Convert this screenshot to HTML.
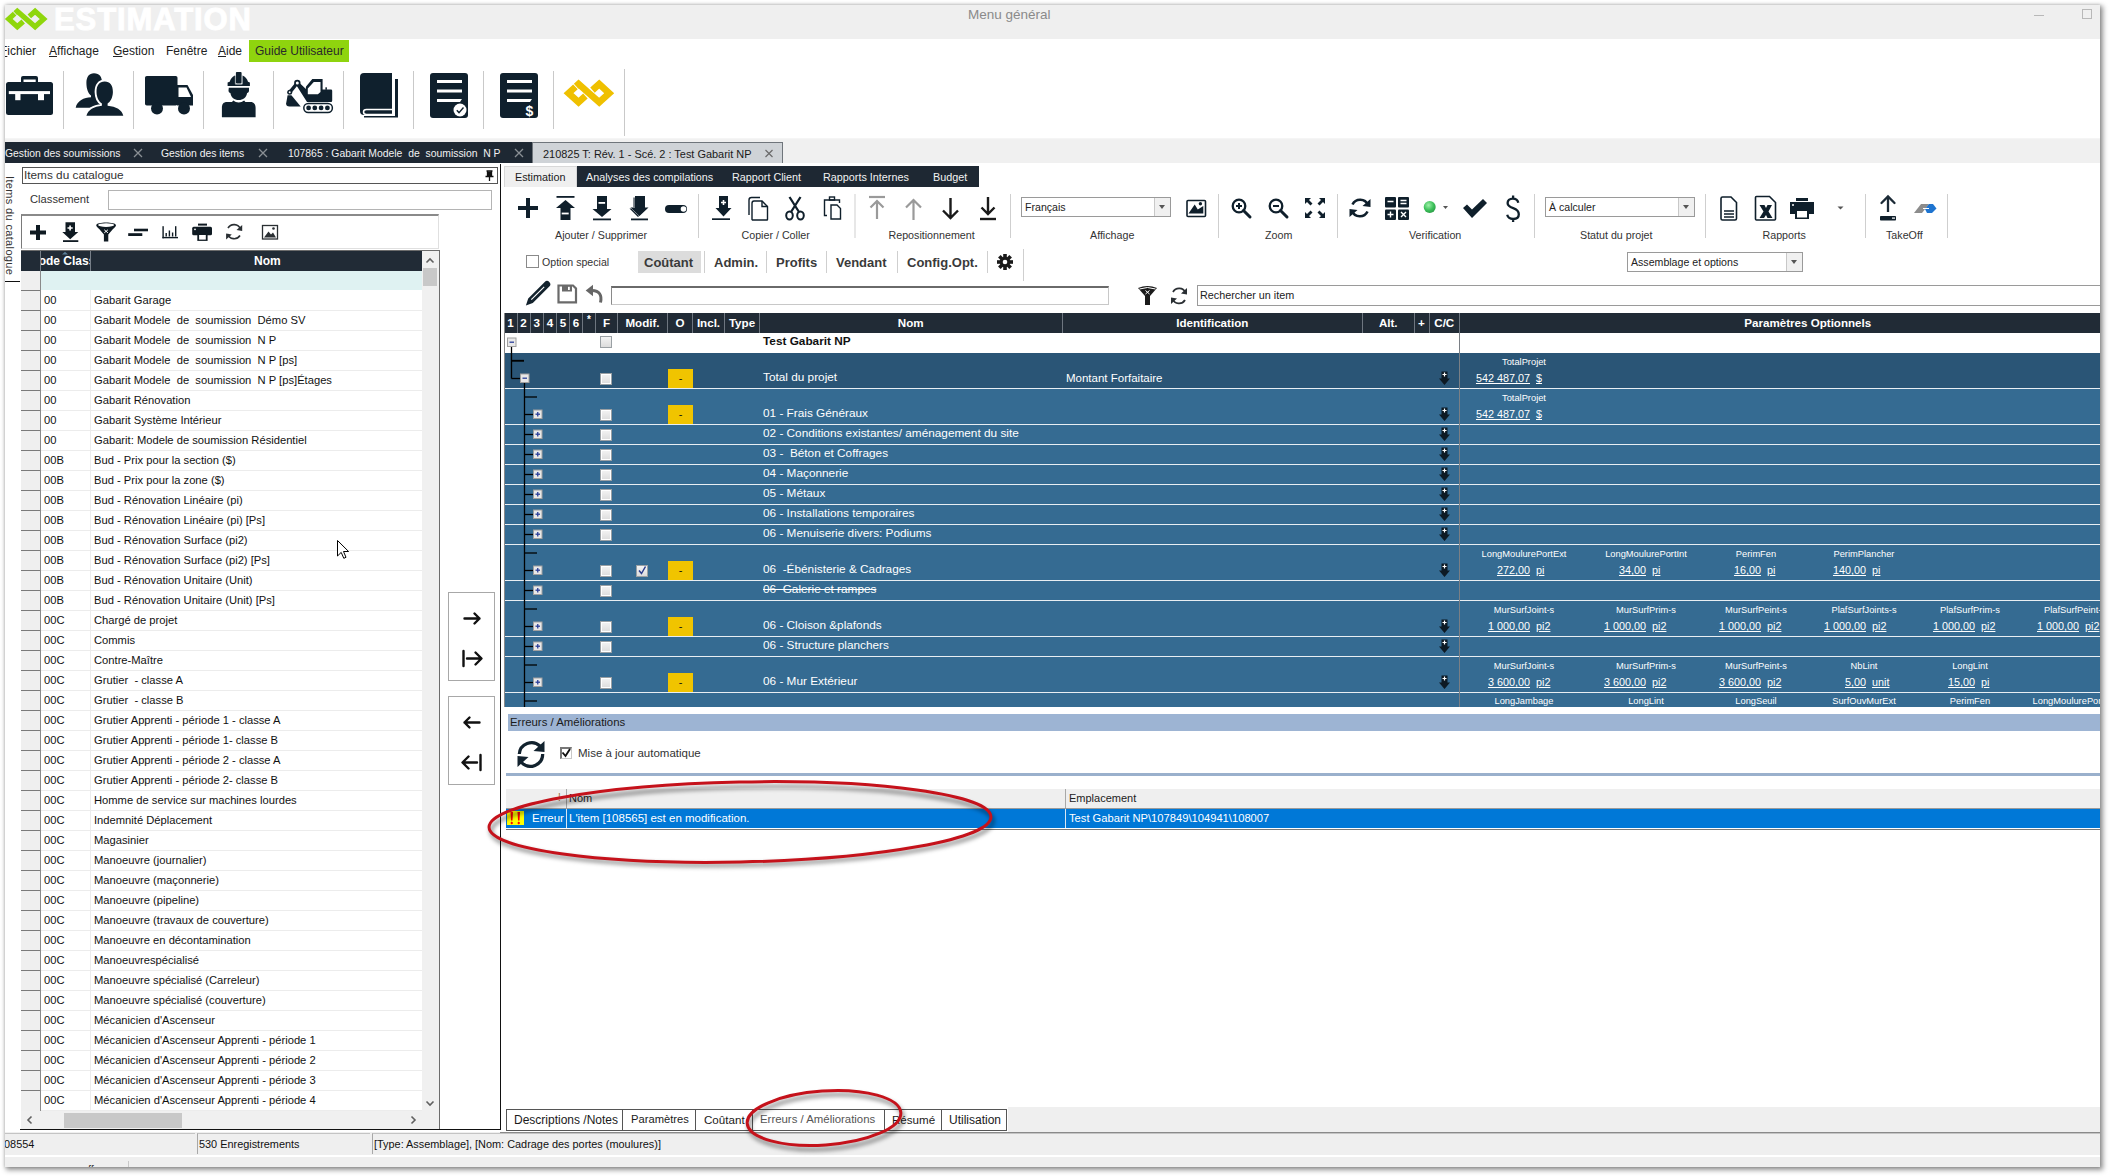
<!DOCTYPE html>
<html><head><meta charset="utf-8">
<style>
*{box-sizing:border-box;margin:0;padding:0}
html,body{width:2109px;height:1176px;overflow:hidden;background:#fff;font-family:"Liberation Sans",sans-serif;font-size:11.5px;color:#1a1a1a;position:relative}
.a{position:absolute}
.t{position:absolute;white-space:nowrap;line-height:1}
svg{position:absolute;overflow:visible}
</style></head><body>
<div class="a" style="left:5px;top:5px;width:2095px;height:1162px;background:#fff;box-shadow:2px 2px 5px 1px rgba(0,0,0,0.42), 0 0 3px rgba(0,0,0,0.18)"></div>
<div class="a" style="left:5px;top:5px;width:2095px;height:34px;background:#efefef"></div>
<svg style="left:0;top:0" width="60" height="40" viewBox="0 0 60 40">
<g fill="none" stroke="#8fd60c" stroke-width="5.2" stroke-linejoin="miter" stroke-linecap="butt">
<path d="M14.6,13.6 L8.7,19 L17.3,26.8 L23.2,21.5"/>
<path d="M29.3,16.4 L35.1,11.2 L43.7,19 L35.1,26.8 L17.3,11.2 L15.2,13.1"/>
</g>
</svg>
<div class="t" style="left:54px;top:6px;font-size:31px;font-weight:bold;color:#fff;letter-spacing:0.9px;line-height:28px;-webkit-text-stroke:0.9px #fff">ESTIMATION</div>
<div class="t" style="left:968px;top:8px;font-size:13.5px;color:#8a8a8a">Menu général</div>
<div class="a" style="left:2034px;top:15px;width:10px;height:1px;background:#b8b8b8"></div>
<div class="a" style="left:2082px;top:9px;width:10px;height:10px;border:1px solid #b8b8b8"></div>

<div class="a" style="left:5px;top:38px;width:400px;height:25px;overflow:hidden">
<div class="t" style="left:-5px;top:7px;font-size:12px;color:#222"><u>F</u>ichier</div>
<div class="t" style="left:44px;top:7px;font-size:12px;color:#222"><u>A</u>ffichage</div>
<div class="t" style="left:108px;top:7px;font-size:12px;color:#222"><u>G</u>estion</div>
<div class="t" style="left:161px;top:7px;font-size:12px;color:#222">Fenêtre</div>
<div class="t" style="left:213px;top:7px;font-size:12px;color:#222"><u>A</u>ide</div>
<div class="a" style="left:244px;top:2px;width:100px;height:22px;background:#8fd40e"></div>
<div class="t" style="left:250px;top:7px;font-size:12px;color:#2a2a2a">Guide Utilisateur</div>
</div>

<svg style="left:0;top:0" width="700" height="142" viewBox="0 0 700 142">
<g fill="#0f202d">
<!-- toolbox -->
<path d="M21,83 L21,78 Q21,76 23,76 L36,76 Q38,76 38,78 L38,83 L35.7,83 L35.7,79.4 L23.5,79.4 L23.5,83 Z"/>
<rect x="6" y="82" width="47" height="33" rx="2.5"/>
</g>
<g fill="#fff">
<rect x="8.8" y="91.1" width="41.2" height="3"/>
<rect x="15.2" y="94" width="5.3" height="6.2"/>
<rect x="38" y="94" width="6" height="6.2"/>
</g>
<g fill="#0f202d">
<!-- people -->
<path d="M94,73.3 C99.5,73.3 102.2,77 102,83 C101.8,89.5 99.5,93.8 97.5,95.4 L97.5,97.4 C101,97.8 104,98.5 106,99.5 L100,107.8 L75.7,107.8 C77,101 84,97.5 91,97.3 L91,95.4 C88.5,93.8 86.4,89.5 86.4,83 C86.4,77 89,73.3 94,73.3 Z"/>
<path stroke="#fff" stroke-width="3.8" paint-order="stroke" d="M104.7,81.5 C110,81.5 113,85.5 112.9,92 C112.8,98 110,102 107.6,103.5 L107.6,105.8 C116,106.5 122,110 123.3,115.8 L86.4,115.8 C88,110 94,106.5 101.9,105.8 L101.9,103.5 C99.4,102 96.6,98 96.5,92 C96.4,85.5 99.4,81.5 104.7,81.5 Z"/>
<rect x="80" y="116.2" width="50" height="3" fill="#fff"/>
<!-- truck -->
<rect x="145" y="76" width="32.5" height="29.5" rx="1.8"/>
<path d="M177,85 L187.5,85 L193,95 L193,105.5 L177,105.5 Z"/>
<circle cx="157" cy="108.5" r="6"/>
<circle cx="184" cy="108.5" r="6"/>
</g>
<path d="M178.5,87.5 L186.5,87.5 L191,97 L178.5,97 Z" fill="#fff"/>
<g fill="#0f202d">
<!-- worker -->
<path d="M227.6,85.9 L227.6,82.5 L229.7,81.8 C230.5,79 232.5,76.8 234.9,75.6 L235.2,75.6 L235.2,84.3 L242.5,84.3 L242.5,75.6 C245.2,76.8 247.3,79 248,81.8 L249.9,82.5 L249.9,85.9 Z"/>
<rect x="235.9" y="72.1" width="5.7" height="11.3" rx="0.8"/>
<path d="M228.8,87.7 L249,87.7 L249,90.5 C249,92 248.2,92.8 247.1,93 C246.5,97.5 243,100.1 238.7,100.1 C234.4,100.1 231,97.5 230.4,93 C229.3,92.8 228.5,92 228.5,90.5 Z"/>
<path d="M221.9,117.3 L221.9,108 C221.9,104 223.5,102 227,102 L232,102 L233.3,100.6 C234.8,101.8 236.7,102.6 238.7,102.6 C240.7,102.6 242.6,101.8 244.1,100.6 L245.4,102 L250.5,102 C254,102 255.6,104.5 255.6,108 L255.6,117.3 Z"/>
</g>
<path d="M235.3,76 L235.3,83.6 Q235.3,84.4 236.1,84.4 L241.4,84.4 Q242.2,84.4 242.2,83.6 L242.2,76" fill="none" stroke="#8d979e" stroke-width="0.8"/>
<g fill="#0f202d">
<!-- excavator -->
<path fill-rule="evenodd" d="M299.6,83 L305.9,89 L305.9,86.7 L312.3,79 L322.6,79 L322.6,89.5 L331,89.5 Q332.2,89.5 332.2,90.7 L332.2,100.7 Q332.2,101.9 331,101.9 L307,101.9 L296.5,85.5 Z M307.8,88.6 L313.8,81.9 L320.5,81.9 L320.5,92 L317.9,94.2 L307.8,94.2 Z"/>
<path d="M297.3,83 L289.7,92.3" stroke="#0f202d" stroke-width="3.4"/>
<circle cx="297.3" cy="83" r="3.2"/><circle cx="289.7" cy="92.3" r="2.5"/>
<rect x="325.4" y="87.3" width="1.5" height="2.5"/>
<path d="M287.6,95.3 L291.4,95.3 L300.7,106.5 L289.5,106.5 Q286,106.5 286.1,103.5 Z"/>
<rect x="303.8" y="103.5" width="28.6" height="8.9" rx="4.45" fill="none" stroke="#0f202d" stroke-width="1.5"/>
<circle cx="308.6" cy="107.95" r="2.4"/><circle cx="314.8" cy="107.95" r="2.4"/><circle cx="321.1" cy="107.95" r="2.4"/><circle cx="327.4" cy="107.95" r="2.4"/>
</g>
<g fill="#fff"><circle cx="297.3" cy="83" r="1.5"/><circle cx="289.7" cy="92.3" r="1"/></g>
<g fill="#0f202d">
<!-- book -->
<path d="M364,73 L392,73 L392,115 L364,115 Q360,115 360,111 L360,77 Q360,73 364,73 Z"/>
<rect x="395" y="79" width="3" height="38"/>
<rect x="364" y="116" width="34" height="1.5"/>
</g>
<path d="M392,109.5 L366.5,109.5 Q363.5,109.5 363.5,112 Q363.5,114.5 366.5,114.5 L392,114.5" fill="none" stroke="#fff" stroke-width="1.5"/>
<g fill="#0f202d">
<!-- doc check -->
<rect x="430" y="73" width="38" height="45" rx="3"/>
<rect x="500" y="73" width="38" height="45" rx="3"/>
</g>
<g fill="#fff">
<rect x="437" y="80" width="25" height="3"/><rect x="437" y="89.5" width="25" height="3"/><path d="M437,99 L462,99 L460,102 L437,102 Z"/>
<circle cx="460" cy="110" r="6.5"/>
<rect x="507" y="80" width="25" height="3"/><rect x="507" y="89.5" width="25" height="3"/><path d="M507,99 L532,99 L530,102 L507,102 Z"/>
</g>
<path d="M456.8,110.3 L459,112.6 L463.5,107.5" fill="none" stroke="#0f202d" stroke-width="1.4"/>
<text x="525.5" y="115.5" font-family="Liberation Sans" font-weight="bold" font-size="14" fill="#fff">$</text>
<!-- yellow logo -->
<g fill="none" stroke="#efc000" stroke-width="5.8" stroke-linejoin="miter" stroke-linecap="butt" transform="translate(558.5,71.1) scale(1.16)">
<path d="M14.6,13.6 L8.7,19 L17.3,26.8 L23.2,21.5"/>
<path d="M29.3,16.4 L35.1,11.2 L43.7,19 L35.1,26.8 L17.3,11.2 L15.2,13.1"/>
</g>
<g fill="#c9c9c9">
<rect x="63" y="71" width="1" height="58"/><rect x="133" y="71" width="1" height="58"/><rect x="203" y="71" width="1" height="58"/><rect x="273" y="71" width="1" height="58"/><rect x="343" y="71" width="1" height="58"/><rect x="413" y="71" width="1" height="58"/><rect x="483" y="71" width="1" height="58"/><rect x="553" y="71" width="1" height="58"/><rect x="624" y="69" width="1" height="67"/>
</g>
<rect x="5" y="138.5" width="2095" height="1.2" fill="#ececec"/>
</svg>

<div class="a" style="left:5px;top:140px;width:2095px;height:23px;background:#f0f0f0"></div>
<div class="a" style="left:5px;top:142px;width:527px;height:21px;background:#1e2833"></div>
<div class="a" style="left:532px;top:142px;width:251px;height:21px;background:#cfd3d7;border:1px solid #6f757b;border-bottom:none"></div>
<div class="t" style="left:5px;top:149px;font-size:10.4px;color:#f2f2f2">Gestion des soumissions</div>
<div class="t" style="left:161px;top:149px;font-size:10.4px;color:#f2f2f2">Gestion des items</div>
<div class="t" style="left:288px;top:149px;font-size:10.4px;color:#f2f2f2">107865 : Gabarit Modele &nbsp;de &nbsp;soumission &nbsp;N P</div>
<div class="t" style="left:543px;top:149px;font-size:10.95px;color:#1a1a1a">210825 T: Rév. 1 - Scé. 2 : Test Gabarit NP</div>
<svg style="left:0;top:0" width="800" height="170">
<g stroke="#8a8f94" stroke-width="1.3">
<path d="M134,149 L142,157 M142,149 L134,157"/>
<path d="M259,149 L267,157 M267,149 L259,157"/>
<path d="M515,149 L523,157 M523,149 L515,157"/>
</g>
<g stroke="#6a6a6a" stroke-width="1.2" transform="translate(0,0)">
<path d="M765.5,150 L772.5,157 M772.5,150 L765.5,157"/>
</g>
</svg>

<div class="t" style="left:5px;top:176px;font-size:11px;color:#333;transform-origin:0 0;letter-spacing:0.35px;transform:translate(9.5px,0) rotate(90deg)">Items du catalogue</div>
<div class="a" style="left:5px;top:281px;width:15px;height:1px;background:#111"></div>
<div class="a" style="left:22px;top:167px;width:476px;height:17px;border:1px solid #555;background:#fff"></div>
<div class="t" style="left:24px;top:170px;font-size:11.8px;color:#333">Items du catalogue</div>
<svg style="left:0;top:0" width="500" height="200"><path d="M486.5,171 L492.5,171 M487.5,171 L487.5,176 M491.5,171 L491.5,176 M485.5,176.5 L493.5,176.5 M489.5,177 L489.5,181" stroke="#111" stroke-width="1.3" fill="none"/><rect x="487.5" y="171.5" width="4" height="5" fill="#111"/></svg>
<div class="t" style="left:30px;top:194px;font-size:11.2px;color:#333">Classement</div>
<div class="a" style="left:108px;top:190px;width:384px;height:20px;border:1px solid #b4b4b4;background:#fff"></div>
<div class="a" style="left:21px;top:214px;width:418px;height:35px;border-top:2px solid #8a8a8a;border-left:1px solid #7a7a7a;border-right:1px solid #e0e0e0;border-bottom:1px solid #e0e0e0;background:#fff"></div>
<svg style="left:0;top:0" width="500" height="260"><g fill="#0f1a22">
<path d="M36,225 L40,225 L40,230.5 L46,230.5 L46,234.5 L40,234.5 L40,240 L36,240 L36,234.5 L30,234.5 L30,230.5 L36,230.5 Z"/>
<path d="M65.5,222.3 L75,222.3 L75,232 L78.3,232 L70.2,239.2 L62.3,232 L65.5,232 Z"/><rect x="63" y="240.2" width="15.3" height="1.8"/>
<path d="M96.2,225.2 C96.2,221.5 116,221.5 116,225.2 C116,226.5 114,228 113,229 L108.3,234.5 L108.3,241.5 L103.9,241.5 L103.9,234.5 L99.2,229 C98.2,228 96.2,226.5 96.2,225.2 Z"/>
<rect x="134" y="228.7" width="14" height="2.6"/><rect x="128.2" y="233.2" width="14.1" height="2.8"/>
<rect x="162.4" y="226.2" width="1.4" height="12.1"/><rect x="162.4" y="236.9" width="15.6" height="1.4"/>
<rect x="165.5" y="233" width="1.4" height="3.5"/><rect x="168.7" y="230.5" width="1.4" height="6"/><rect x="171.9" y="232.5" width="1.4" height="4"/><rect x="175" y="226.2" width="1.4" height="10.3"/>
<rect x="198" y="223.6" width="9" height="2"/>
<rect x="192.2" y="226.8" width="19.8" height="8.4" rx="1.5"/>
<rect x="197.3" y="233.2" width="10.3" height="7.7"/>
</g>
<ellipse cx="106.1" cy="225.1" rx="8" ry="1.8" fill="#fff"/>
<path d="M104.3,229.8 L107.9,232.8 M107.9,229.8 L104.3,232.8" stroke="#fff" stroke-width="1"/>
<path d="M67.5,228 L72.7,228 M70.1,225.4 L70.1,230.6" stroke="#fff" stroke-width="1.6"/>
<rect x="199.1" y="235" width="6.7" height="4.6" fill="#fff"/><circle cx="195" cy="229.3" r="0.9" fill="#fff"/>
<g fill="none" stroke="#2a2f33" stroke-width="1.6">
<path d="M240.5,229 A7,7 0 0 0 228,228"/><path d="M227.5,234 A7,7 0 0 0 240,235.5"/>
</g>
<path d="M242.2,224.9 L242.2,231 L236.5,230 Z M226.1,239.6 L226.1,233.5 L231.8,234.5 Z" fill="#2a2f33"/>
<rect x="262.5" y="225.5" width="15" height="13.5" fill="none" stroke="#2a2f33" stroke-width="1.3"/>
<path d="M264,237.5 L268.5,231.5 L271,234.5 L273,232.5 L276,237.5 Z" fill="#2a2f33"/><circle cx="273.5" cy="228.5" r="1.3" fill="#2a2f33"/>
</svg>
<div class="a" style="left:21px;top:250px;width:419px;height:880px;border:1px solid #6c6c6c;border-bottom:none;background:#fff"></div>
<div class="a" style="left:20px;top:1128.5px;width:480px;height:1.6px;background:#111"></div>
<div class="a" style="left:21px;top:251px;width:401px;height:20px;background:#212b36"></div>
<div class="a" style="left:40px;top:251px;width:1px;height:20px;background:#777f88"></div>
<div class="a" style="left:90px;top:251px;width:1px;height:20px;background:#777f88"></div>
<div class="a" style="left:41px;top:251px;width:49px;height:20px;overflow:hidden"><div class="t" style="left:-11px;top:4px;font-size:12px;font-weight:bold;color:#fff">Code Classe</div></div>
<div class="t" style="left:254px;top:255px;font-size:12px;font-weight:bold;color:#fff">Nom</div>
<svg style="left:0;top:0" width="100" height="260"><path d="M62,254.5 L65,251.8 L68,254.5 Z" fill="#5a7f99"/></svg>
<div class="a" style="left:21px;top:271px;width:19px;height:840px;background:#efefef"></div>
<div class="a" style="left:40px;top:271px;width:382px;height:19px;background:#dff2f2"></div>
<div class="a" style="left:40px;top:271px;width:1px;height:840px;background:#8a8a8a"></div>
<div class="a" style="left:90px;top:290px;width:1px;height:821px;background:#ececec"></div>
<div class="a" style="left:21px;top:290px;width:19px;height:1px;background:#7a7a7a"></div>
<div class="a" style="left:41px;top:310px;width:381px;height:1px;background:#ececec"></div>
<div class="t" style="left:44px;top:295px;font-size:11.2px;color:#111">00</div>
<div class="t" style="left:94px;top:295px;font-size:11.2px;color:#111">Gabarit Garage</div>
<div class="a" style="left:21px;top:310px;width:19px;height:1px;background:#7a7a7a"></div>
<div class="a" style="left:41px;top:330px;width:381px;height:1px;background:#ececec"></div>
<div class="t" style="left:44px;top:315px;font-size:11.2px;color:#111">00</div>
<div class="t" style="left:94px;top:315px;font-size:11.2px;color:#111">Gabarit Modele&nbsp; de&nbsp; soumission&nbsp; Démo SV</div>
<div class="a" style="left:21px;top:330px;width:19px;height:1px;background:#7a7a7a"></div>
<div class="a" style="left:41px;top:350px;width:381px;height:1px;background:#ececec"></div>
<div class="t" style="left:44px;top:335px;font-size:11.2px;color:#111">00</div>
<div class="t" style="left:94px;top:335px;font-size:11.2px;color:#111">Gabarit Modele&nbsp; de&nbsp; soumission&nbsp; N P</div>
<div class="a" style="left:21px;top:350px;width:19px;height:1px;background:#7a7a7a"></div>
<div class="a" style="left:41px;top:370px;width:381px;height:1px;background:#ececec"></div>
<div class="t" style="left:44px;top:355px;font-size:11.2px;color:#111">00</div>
<div class="t" style="left:94px;top:355px;font-size:11.2px;color:#111">Gabarit Modele&nbsp; de&nbsp; soumission&nbsp; N P [ps]</div>
<div class="a" style="left:21px;top:370px;width:19px;height:1px;background:#7a7a7a"></div>
<div class="a" style="left:41px;top:390px;width:381px;height:1px;background:#ececec"></div>
<div class="t" style="left:44px;top:375px;font-size:11.2px;color:#111">00</div>
<div class="t" style="left:94px;top:375px;font-size:11.2px;color:#111">Gabarit Modele&nbsp; de&nbsp; soumission&nbsp; N P [ps]Étages</div>
<div class="a" style="left:21px;top:390px;width:19px;height:1px;background:#7a7a7a"></div>
<div class="a" style="left:41px;top:410px;width:381px;height:1px;background:#ececec"></div>
<div class="t" style="left:44px;top:395px;font-size:11.2px;color:#111">00</div>
<div class="t" style="left:94px;top:395px;font-size:11.2px;color:#111">Gabarit Rénovation</div>
<div class="a" style="left:21px;top:410px;width:19px;height:1px;background:#7a7a7a"></div>
<div class="a" style="left:41px;top:430px;width:381px;height:1px;background:#ececec"></div>
<div class="t" style="left:44px;top:415px;font-size:11.2px;color:#111">00</div>
<div class="t" style="left:94px;top:415px;font-size:11.2px;color:#111">Gabarit Système Intérieur</div>
<div class="a" style="left:21px;top:430px;width:19px;height:1px;background:#7a7a7a"></div>
<div class="a" style="left:41px;top:450px;width:381px;height:1px;background:#ececec"></div>
<div class="t" style="left:44px;top:435px;font-size:11.2px;color:#111">00</div>
<div class="t" style="left:94px;top:435px;font-size:11.2px;color:#111">Gabarit: Modele de soumission Résidentiel</div>
<div class="a" style="left:21px;top:450px;width:19px;height:1px;background:#7a7a7a"></div>
<div class="a" style="left:41px;top:470px;width:381px;height:1px;background:#ececec"></div>
<div class="t" style="left:44px;top:455px;font-size:11.2px;color:#111">00B</div>
<div class="t" style="left:94px;top:455px;font-size:11.2px;color:#111">Bud - Prix pour la section ($)</div>
<div class="a" style="left:21px;top:470px;width:19px;height:1px;background:#7a7a7a"></div>
<div class="a" style="left:41px;top:490px;width:381px;height:1px;background:#ececec"></div>
<div class="t" style="left:44px;top:475px;font-size:11.2px;color:#111">00B</div>
<div class="t" style="left:94px;top:475px;font-size:11.2px;color:#111">Bud - Prix pour la zone ($)</div>
<div class="a" style="left:21px;top:490px;width:19px;height:1px;background:#7a7a7a"></div>
<div class="a" style="left:41px;top:510px;width:381px;height:1px;background:#ececec"></div>
<div class="t" style="left:44px;top:495px;font-size:11.2px;color:#111">00B</div>
<div class="t" style="left:94px;top:495px;font-size:11.2px;color:#111">Bud - Rénovation Linéaire (pi)</div>
<div class="a" style="left:21px;top:510px;width:19px;height:1px;background:#7a7a7a"></div>
<div class="a" style="left:41px;top:530px;width:381px;height:1px;background:#ececec"></div>
<div class="t" style="left:44px;top:515px;font-size:11.2px;color:#111">00B</div>
<div class="t" style="left:94px;top:515px;font-size:11.2px;color:#111">Bud - Rénovation Linéaire (pi) [Ps]</div>
<div class="a" style="left:21px;top:530px;width:19px;height:1px;background:#7a7a7a"></div>
<div class="a" style="left:41px;top:550px;width:381px;height:1px;background:#ececec"></div>
<div class="t" style="left:44px;top:535px;font-size:11.2px;color:#111">00B</div>
<div class="t" style="left:94px;top:535px;font-size:11.2px;color:#111">Bud - Rénovation Surface (pi2)</div>
<div class="a" style="left:21px;top:550px;width:19px;height:1px;background:#7a7a7a"></div>
<div class="a" style="left:41px;top:570px;width:381px;height:1px;background:#ececec"></div>
<div class="t" style="left:44px;top:555px;font-size:11.2px;color:#111">00B</div>
<div class="t" style="left:94px;top:555px;font-size:11.2px;color:#111">Bud - Rénovation Surface (pi2) [Ps]</div>
<div class="a" style="left:21px;top:570px;width:19px;height:1px;background:#7a7a7a"></div>
<div class="a" style="left:41px;top:590px;width:381px;height:1px;background:#ececec"></div>
<div class="t" style="left:44px;top:575px;font-size:11.2px;color:#111">00B</div>
<div class="t" style="left:94px;top:575px;font-size:11.2px;color:#111">Bud - Rénovation Unitaire (Unit)</div>
<div class="a" style="left:21px;top:590px;width:19px;height:1px;background:#7a7a7a"></div>
<div class="a" style="left:41px;top:610px;width:381px;height:1px;background:#ececec"></div>
<div class="t" style="left:44px;top:595px;font-size:11.2px;color:#111">00B</div>
<div class="t" style="left:94px;top:595px;font-size:11.2px;color:#111">Bud - Rénovation Unitaire (Unit) [Ps]</div>
<div class="a" style="left:21px;top:610px;width:19px;height:1px;background:#7a7a7a"></div>
<div class="a" style="left:41px;top:630px;width:381px;height:1px;background:#ececec"></div>
<div class="t" style="left:44px;top:615px;font-size:11.2px;color:#111">00C</div>
<div class="t" style="left:94px;top:615px;font-size:11.2px;color:#111">Chargé de projet</div>
<div class="a" style="left:21px;top:630px;width:19px;height:1px;background:#7a7a7a"></div>
<div class="a" style="left:41px;top:650px;width:381px;height:1px;background:#ececec"></div>
<div class="t" style="left:44px;top:635px;font-size:11.2px;color:#111">00C</div>
<div class="t" style="left:94px;top:635px;font-size:11.2px;color:#111">Commis</div>
<div class="a" style="left:21px;top:650px;width:19px;height:1px;background:#7a7a7a"></div>
<div class="a" style="left:41px;top:670px;width:381px;height:1px;background:#ececec"></div>
<div class="t" style="left:44px;top:655px;font-size:11.2px;color:#111">00C</div>
<div class="t" style="left:94px;top:655px;font-size:11.2px;color:#111">Contre-Maître</div>
<div class="a" style="left:21px;top:670px;width:19px;height:1px;background:#7a7a7a"></div>
<div class="a" style="left:41px;top:690px;width:381px;height:1px;background:#ececec"></div>
<div class="t" style="left:44px;top:675px;font-size:11.2px;color:#111">00C</div>
<div class="t" style="left:94px;top:675px;font-size:11.2px;color:#111">Grutier&nbsp; - classe A</div>
<div class="a" style="left:21px;top:690px;width:19px;height:1px;background:#7a7a7a"></div>
<div class="a" style="left:41px;top:710px;width:381px;height:1px;background:#ececec"></div>
<div class="t" style="left:44px;top:695px;font-size:11.2px;color:#111">00C</div>
<div class="t" style="left:94px;top:695px;font-size:11.2px;color:#111">Grutier&nbsp; - classe B</div>
<div class="a" style="left:21px;top:710px;width:19px;height:1px;background:#7a7a7a"></div>
<div class="a" style="left:41px;top:730px;width:381px;height:1px;background:#ececec"></div>
<div class="t" style="left:44px;top:715px;font-size:11.2px;color:#111">00C</div>
<div class="t" style="left:94px;top:715px;font-size:11.2px;color:#111">Grutier Apprenti - période 1 - classe A</div>
<div class="a" style="left:21px;top:730px;width:19px;height:1px;background:#7a7a7a"></div>
<div class="a" style="left:41px;top:750px;width:381px;height:1px;background:#ececec"></div>
<div class="t" style="left:44px;top:735px;font-size:11.2px;color:#111">00C</div>
<div class="t" style="left:94px;top:735px;font-size:11.2px;color:#111">Grutier Apprenti - période 1- classe B</div>
<div class="a" style="left:21px;top:750px;width:19px;height:1px;background:#7a7a7a"></div>
<div class="a" style="left:41px;top:770px;width:381px;height:1px;background:#ececec"></div>
<div class="t" style="left:44px;top:755px;font-size:11.2px;color:#111">00C</div>
<div class="t" style="left:94px;top:755px;font-size:11.2px;color:#111">Grutier Apprenti - période 2 - classe A</div>
<div class="a" style="left:21px;top:770px;width:19px;height:1px;background:#7a7a7a"></div>
<div class="a" style="left:41px;top:790px;width:381px;height:1px;background:#ececec"></div>
<div class="t" style="left:44px;top:775px;font-size:11.2px;color:#111">00C</div>
<div class="t" style="left:94px;top:775px;font-size:11.2px;color:#111">Grutier Apprenti - période 2- classe B</div>
<div class="a" style="left:21px;top:790px;width:19px;height:1px;background:#7a7a7a"></div>
<div class="a" style="left:41px;top:810px;width:381px;height:1px;background:#ececec"></div>
<div class="t" style="left:44px;top:795px;font-size:11.2px;color:#111">00C</div>
<div class="t" style="left:94px;top:795px;font-size:11.2px;color:#111">Homme de service sur machines lourdes</div>
<div class="a" style="left:21px;top:810px;width:19px;height:1px;background:#7a7a7a"></div>
<div class="a" style="left:41px;top:830px;width:381px;height:1px;background:#ececec"></div>
<div class="t" style="left:44px;top:815px;font-size:11.2px;color:#111">00C</div>
<div class="t" style="left:94px;top:815px;font-size:11.2px;color:#111">Indemnité Déplacement</div>
<div class="a" style="left:21px;top:830px;width:19px;height:1px;background:#7a7a7a"></div>
<div class="a" style="left:41px;top:850px;width:381px;height:1px;background:#ececec"></div>
<div class="t" style="left:44px;top:835px;font-size:11.2px;color:#111">00C</div>
<div class="t" style="left:94px;top:835px;font-size:11.2px;color:#111">Magasinier</div>
<div class="a" style="left:21px;top:850px;width:19px;height:1px;background:#7a7a7a"></div>
<div class="a" style="left:41px;top:870px;width:381px;height:1px;background:#ececec"></div>
<div class="t" style="left:44px;top:855px;font-size:11.2px;color:#111">00C</div>
<div class="t" style="left:94px;top:855px;font-size:11.2px;color:#111">Manoeuvre (journalier)</div>
<div class="a" style="left:21px;top:870px;width:19px;height:1px;background:#7a7a7a"></div>
<div class="a" style="left:41px;top:890px;width:381px;height:1px;background:#ececec"></div>
<div class="t" style="left:44px;top:875px;font-size:11.2px;color:#111">00C</div>
<div class="t" style="left:94px;top:875px;font-size:11.2px;color:#111">Manoeuvre (maçonnerie)</div>
<div class="a" style="left:21px;top:890px;width:19px;height:1px;background:#7a7a7a"></div>
<div class="a" style="left:41px;top:910px;width:381px;height:1px;background:#ececec"></div>
<div class="t" style="left:44px;top:895px;font-size:11.2px;color:#111">00C</div>
<div class="t" style="left:94px;top:895px;font-size:11.2px;color:#111">Manoeuvre (pipeline)</div>
<div class="a" style="left:21px;top:910px;width:19px;height:1px;background:#7a7a7a"></div>
<div class="a" style="left:41px;top:930px;width:381px;height:1px;background:#ececec"></div>
<div class="t" style="left:44px;top:915px;font-size:11.2px;color:#111">00C</div>
<div class="t" style="left:94px;top:915px;font-size:11.2px;color:#111">Manoeuvre (travaux de couverture)</div>
<div class="a" style="left:21px;top:930px;width:19px;height:1px;background:#7a7a7a"></div>
<div class="a" style="left:41px;top:950px;width:381px;height:1px;background:#ececec"></div>
<div class="t" style="left:44px;top:935px;font-size:11.2px;color:#111">00C</div>
<div class="t" style="left:94px;top:935px;font-size:11.2px;color:#111">Manoeuvre en décontamination</div>
<div class="a" style="left:21px;top:950px;width:19px;height:1px;background:#7a7a7a"></div>
<div class="a" style="left:41px;top:970px;width:381px;height:1px;background:#ececec"></div>
<div class="t" style="left:44px;top:955px;font-size:11.2px;color:#111">00C</div>
<div class="t" style="left:94px;top:955px;font-size:11.2px;color:#111">Manoeuvrespécialisé</div>
<div class="a" style="left:21px;top:970px;width:19px;height:1px;background:#7a7a7a"></div>
<div class="a" style="left:41px;top:990px;width:381px;height:1px;background:#ececec"></div>
<div class="t" style="left:44px;top:975px;font-size:11.2px;color:#111">00C</div>
<div class="t" style="left:94px;top:975px;font-size:11.2px;color:#111">Manoeuvre spécialisé (Carreleur)</div>
<div class="a" style="left:21px;top:990px;width:19px;height:1px;background:#7a7a7a"></div>
<div class="a" style="left:41px;top:1010px;width:381px;height:1px;background:#ececec"></div>
<div class="t" style="left:44px;top:995px;font-size:11.2px;color:#111">00C</div>
<div class="t" style="left:94px;top:995px;font-size:11.2px;color:#111">Manoeuvre spécialisé (couverture)</div>
<div class="a" style="left:21px;top:1010px;width:19px;height:1px;background:#7a7a7a"></div>
<div class="a" style="left:41px;top:1030px;width:381px;height:1px;background:#ececec"></div>
<div class="t" style="left:44px;top:1015px;font-size:11.2px;color:#111">00C</div>
<div class="t" style="left:94px;top:1015px;font-size:11.2px;color:#111">Mécanicien d'Ascenseur</div>
<div class="a" style="left:21px;top:1030px;width:19px;height:1px;background:#7a7a7a"></div>
<div class="a" style="left:41px;top:1050px;width:381px;height:1px;background:#ececec"></div>
<div class="t" style="left:44px;top:1035px;font-size:11.2px;color:#111">00C</div>
<div class="t" style="left:94px;top:1035px;font-size:11.2px;color:#111">Mécanicien d'Ascenseur Apprenti - période 1</div>
<div class="a" style="left:21px;top:1050px;width:19px;height:1px;background:#7a7a7a"></div>
<div class="a" style="left:41px;top:1070px;width:381px;height:1px;background:#ececec"></div>
<div class="t" style="left:44px;top:1055px;font-size:11.2px;color:#111">00C</div>
<div class="t" style="left:94px;top:1055px;font-size:11.2px;color:#111">Mécanicien d'Ascenseur Apprenti - période 2</div>
<div class="a" style="left:21px;top:1070px;width:19px;height:1px;background:#7a7a7a"></div>
<div class="a" style="left:41px;top:1090px;width:381px;height:1px;background:#ececec"></div>
<div class="t" style="left:44px;top:1075px;font-size:11.2px;color:#111">00C</div>
<div class="t" style="left:94px;top:1075px;font-size:11.2px;color:#111">Mécanicien d'Ascenseur Apprenti - période 3</div>
<div class="a" style="left:21px;top:1090px;width:19px;height:1px;background:#7a7a7a"></div>
<div class="a" style="left:41px;top:1110px;width:381px;height:1px;background:#ececec"></div>
<div class="t" style="left:44px;top:1095px;font-size:11.2px;color:#111">00C</div>
<div class="t" style="left:94px;top:1095px;font-size:11.2px;color:#111">Mécanicien d'Ascenseur Apprenti - période 4</div>
<div class="a" style="left:422px;top:251px;width:17px;height:878px;background:#f0f0f0"></div>
<div class="a" style="left:423px;top:268px;width:14px;height:18px;background:#c8c8c8"></div>
<div class="a" style="left:21px;top:1111px;width:401px;height:18px;background:#f0f0f0"></div>
<div class="a" style="left:64px;top:1113px;width:118px;height:15px;background:#c8c8c8"></div>
<svg style="left:0;top:0" width="500" height="1140"><g fill="none" stroke="#606060" stroke-width="1.6">
<path d="M426.5,262.5 L430,259 L433.5,262.5"/><path d="M426.5,1101.5 L430,1105 L433.5,1101.5"/>
<path d="M31.5,1116.5 L28,1120 L31.5,1123.5"/><path d="M411.5,1116.5 L415,1120 L411.5,1123.5"/>
</g></svg>
<div class="a" style="left:448px;top:592px;width:47px;height:89px;border:1px solid #a8a8a8"></div>
<div class="a" style="left:448px;top:696px;width:47px;height:89px;border:1px solid #a8a8a8"></div>
<svg style="left:0;top:0" width="500" height="800"><g fill="none" stroke="#111" stroke-width="2.4" stroke-linecap="round" stroke-linejoin="round">
<path d="M464.5,618.5 L479.5,618.5 M474.5,613.5 L479.5,618.5 L474.5,623.5"/>
<path d="M463.5,651 L463.5,666 M467,658.5 L481,658.5 M475.5,652.5 L481.5,658.5 L475.5,664.5"/>
<path d="M479.5,722.5 L464.5,722.5 M469.5,717.5 L464.5,722.5 L469.5,727.5"/>
<path d="M480.5,755 L480.5,770 M477,762.5 L463,762.5 M468.5,756.5 L462.5,762.5 L468.5,768.5"/>
</g></svg>
<div class="a" style="left:499.5px;top:164px;width:1.6px;height:966px;background:#111"></div>
<!-- sub tabs -->
<div class="a" style="left:504px;top:166px;width:73px;height:21px;background:#efefef;border:1px solid #d8d8d8;border-bottom:none"></div>
<div class="a" style="left:577px;top:166px;width:402px;height:21px;background:#1e2833"></div>
<div class="t" style="left:515px;top:172px;font-size:10.8px;color:#1a1a1a">Estimation</div>
<div class="t" style="left:586px;top:172px;font-size:10.8px;color:#f2f2f2">Analyses des compilations</div>
<div class="t" style="left:732px;top:172px;font-size:10.8px;color:#f2f2f2">Rapport Client</div>
<div class="t" style="left:823px;top:172px;font-size:10.8px;color:#f2f2f2">Rapports Internes</div>
<div class="t" style="left:933px;top:172px;font-size:10.8px;color:#f2f2f2">Budget</div>
<!-- ribbon labels -->
<div class="t" style="left:555px;top:230px;font-size:10.7px;color:#333">Ajouter / Supprimer</div>
<div class="t" style="left:741.5px;top:230px;font-size:10.7px;color:#333">Copier / Coller</div>
<div class="t" style="left:888.5px;top:230px;font-size:10.7px;color:#333">Repositionnement</div>
<div class="t" style="left:1090px;top:230px;font-size:10.7px;color:#333">Affichage</div>
<div class="t" style="left:1265px;top:230px;font-size:10.7px;color:#333">Zoom</div>
<div class="t" style="left:1409px;top:230px;font-size:10.7px;color:#333">Verification</div>
<div class="t" style="left:1580px;top:230px;font-size:10.7px;color:#333">Statut du projet</div>
<div class="t" style="left:1762.5px;top:230px;font-size:10.7px;color:#333">Rapports</div>
<div class="t" style="left:1886px;top:230px;font-size:10.7px;color:#333">TakeOff</div>
<!-- combos -->
<div class="a" style="left:1021px;top:197px;width:150px;height:20px;border:1px solid #9a9a9a;background:#fff"></div>
<div class="a" style="left:1154px;top:198px;width:16px;height:18px;background:#f0f0f0;border-left:1px solid #c8c8c8"></div>
<div class="t" style="left:1025px;top:202px;font-size:10.6px;color:#222">Français</div>
<div class="a" style="left:1545px;top:197px;width:150px;height:20px;border:1px solid #9a9a9a;background:#fff"></div>
<div class="a" style="left:1678px;top:198px;width:16px;height:18px;background:#f0f0f0;border-left:1px solid #c8c8c8"></div>
<div class="t" style="left:1549px;top:202px;font-size:10.6px;color:#222">À calculer</div>
<div class="a" style="left:1627px;top:252px;width:176px;height:20px;border:1px solid #9a9a9a;background:#fff"></div>
<div class="a" style="left:1786px;top:253px;width:16px;height:18px;background:#f0f0f0;border-left:1px solid #c8c8c8"></div>
<div class="t" style="left:1631px;top:257px;font-size:10.6px;color:#222">Assemblage et options</div>
<svg style="left:0;top:0" width="2109" height="320">
<g fill="#555"><path d="M1159,205 L1165,205 L1162,209 Z"/><path d="M1683,205 L1689,205 L1686,209 Z"/><path d="M1791,260 L1797,260 L1794,264 Z"/>
<path d="M1443,206 L1448,206 L1445.5,209 Z"/><path d="M1837.5,206.5 L1843.5,206.5 L1840.5,209.5 Z"/></g>
<!-- separators -->
<g fill="#cfcfcf">
<rect x="698" y="194" width="1" height="44"/><rect x="854.5" y="194" width="1" height="44"/><rect x="1010" y="194" width="1" height="44"/><rect x="1218" y="194" width="1" height="44"/><rect x="1337" y="194" width="1" height="44"/><rect x="1534" y="194" width="1" height="44"/><rect x="1705" y="194" width="1" height="44"/><rect x="1865" y="194" width="1" height="44"/><rect x="1947" y="194" width="1" height="44"/>
<rect x="704" y="251" width="1" height="22"/><rect x="766" y="251" width="1" height="22"/><rect x="826" y="251" width="1" height="22"/><rect x="897" y="251" width="1" height="22"/><rect x="987" y="251" width="1" height="22"/><rect x="1023" y="249" width="1" height="32"/>
</g>
<g fill="#0f1f2b">
<!-- plus -->
<path d="M526,198 L530,198 L530,206 L538,206 L538,210 L530,210 L530,218 L526,218 L526,210 L518,210 L518,206 L526,206 Z"/>
<!-- up arrow with bar -->
<rect x="556.5" y="196" width="18" height="1.8"/>
<path d="M565.5,200 L575,208 L570.5,208 L570.5,220 L560.5,220 L560.5,208 L556,208 Z"/>
<!-- down arrow minus -->
<path d="M597,196 L607,196 L607,209 L611.5,209 L602,217 L592.5,209 L597,209 Z"/>
<rect x="593" y="218.5" width="18" height="1.8"/>
<!-- down double -->
<path d="M633.5,197.5 L643.5,197.5 L643.5,208.5 L647,208.5 L638,217 L629.5,208.5 L633.5,208.5 Z"/>
<path d="M635,196 L645,196 L645,207.5 L648.5,207.5 L639.5,216 L630.5,207.5 L635,207.5 Z" stroke="#fff" stroke-width="0.8" paint-order="stroke"/>
<rect x="631" y="218.5" width="17" height="1.8"/>
<!-- toggle -->
<rect x="665" y="205" width="22" height="8" rx="4"/>
<!-- download plus -->
<path d="M719,196 L728,196 L728,208 L731.5,208 L723.5,216.5 L715.5,208 L719,208 Z"/>
<rect x="712" y="218.3" width="18" height="1.7"/>
<!-- scissors -->

<!-- zoom in/out -->
<circle cx="1239" cy="206" r="6.3" fill="none" stroke="#0f1f2b" stroke-width="2.3"/>
<path d="M1243.5,210.5 L1250,217" stroke="#0f1f2b" stroke-width="3" stroke-linecap="round"/>
<circle cx="1276" cy="206" r="6.3" fill="none" stroke="#0f1f2b" stroke-width="2.3"/>
<path d="M1280.5,210.5 L1287,217" stroke="#0f1f2b" stroke-width="3" stroke-linecap="round"/>
<!-- fit -->
<path d="M1305,198 L1311,198 L1309,200 L1312.5,203.5 L1310.5,205.5 L1307,202 L1305,204 Z"/>
<path d="M1325,198 L1319,198 L1321,200 L1317.5,203.5 L1319.5,205.5 L1323,202 L1325,204 Z"/>
<path d="M1305,218 L1311,218 L1309,216 L1312.5,212.5 L1310.5,210.5 L1307,214 L1305,212 Z"/>
<path d="M1325,218 L1319,218 L1321,216 L1317.5,212.5 L1319.5,210.5 L1323,214 L1325,212 Z"/>
<!-- calc -->
<rect x="1385" y="197" width="11" height="10.5" rx="1"/><rect x="1398" y="197" width="11" height="10.5" rx="1"/>
<rect x="1385" y="209.5" width="11" height="10.5" rx="1"/><rect x="1398" y="209.5" width="11" height="10.5" rx="1"/>
<!-- check -->
<path d="M1463,208 L1467,204.5 L1472,209.5 L1483,199 L1487,203 L1472,218 Z"/>
<!-- excel X and printer -->
<path d="M1759.5,205 L1764.5,205 L1766,208 L1767.5,205 L1772,205 L1768.5,211.5 L1772.5,218 L1767.5,218 L1766,215 L1764,218 L1759.5,218 L1763.5,211.5 Z"/>
<rect x="1796" y="198" width="12" height="3"/>
<path d="M1790,202 L1814,202 L1814,214 L1809,214 L1809,219 L1795,219 L1795,214 L1790,214 Z"/>
<!-- upload -->
<rect x="1880" y="216" width="16" height="4.5" rx="0.8"/>
<path d="M1888,197 L1888,212" stroke="#1b2a36" stroke-width="2.3" fill="none"/>
<path d="M1881.5,203 L1888,196.5 L1894.5,203" stroke="#1b2a36" stroke-width="2.3" fill="none" stroke-linecap="round"/>
</g>
<g fill="#fff">
<rect x="561.7" y="212.6" width="7" height="1.8"/><rect x="598.5" y="202" width="6.6" height="1.8"/>
<circle cx="683.5" cy="209" r="2.8"/>
<path d="M721,202.5 L726,202.5 M723.5,200 L723.5,205" stroke="#fff" stroke-width="1.6"/>
<path d="M1387.5,201.5 L1393.5,201.5 M1400.5,200.5 L1406.5,200.5 M1400.5,203.5 L1406.5,203.5 M1387.5,214.5 L1393.5,214.5 M1390.5,211.5 L1390.5,217.5 M1401,212 L1406,217 M1406,212 L1401,217" stroke="#fff" stroke-width="1.4"/>
<rect x="1797" y="211" width="10" height="6.5"/><circle cx="1793" cy="205" r="1"/>
<rect x="1892" y="217.5" width="3" height="1.2"/>
</g>
<g fill="none" stroke="#0f1f2b" stroke-width="1.4">
<path d="M1236,206 L1242,206 M1239,203 L1239,209" stroke-width="2"/>
<path d="M1273,206 L1279,206" stroke-width="2"/>
<!-- copy -->
<path d="M752,219.5 L752,203.5 Q752,201 754,201 L762,201 L767.5,206.5 L767.5,219.5 Q767.5,220 767,220 L752.5,220 Z"/>
<path d="M749,215 L749,200 Q749,197.5 751.5,197.5 L760,197.5"/>
<path d="M762,201 L762,206.5 L767.5,206.5"/>
<!-- scissors rings --><path d="M789.5,197 L799,212 M800.5,197 L791,212" stroke-width="2.3"/>
<ellipse cx="789.5" cy="215.5" rx="3.3" ry="4" stroke-width="2"/><ellipse cx="800.5" cy="215.5" rx="3.3" ry="4" stroke-width="2"/>
<!-- clipboard -->
<path d="M827,215.5 L824.5,215.5 L824.5,200 L839.5,200 L839.5,203"/>
<rect x="829.5" y="197" width="5" height="3"/>
<path d="M831,205 L837,205 L840.5,208.5 L840.5,219 L831,219 Z"/>
<!-- doc -->
<path d="M1721,198.5 Q1721,197 1722.5,197 L1731,197 L1736.5,202.5 L1736.5,218.5 Q1736.5,220 1735,220 L1722.5,220 Q1721,220 1721,218.5 Z" stroke-width="1.6"/>
<path d="M1724,211 L1734,211 M1724,214 L1734,214 M1724,217 L1734,217" stroke-width="1.3"/>
<path d="M1755.5,197.5 Q1755.5,196.5 1756.5,196.5 L1769.5,196.5 L1775.5,202.5 L1775.5,219 Q1775.5,220 1774.5,220 L1756.5,220 Q1755.5,220 1755.5,219 Z" stroke-width="1.6"/>
<!-- image icon -->
<rect x="1187" y="200.5" width="18.5" height="16" rx="1" stroke-width="1.6"/>
<!-- refresh ribbon -->
<path d="M1368,205 A8.5,8.5 0 0 0 1352.5,204.5" stroke-width="2.6"/>
<path d="M1352,211 A8.5,8.5 0 0 0 1367.5,211.5" stroke-width="2.6"/>
</g>
<path d="M1370.5,199 L1370.5,207 L1362.5,206 Z M1349.5,217 L1349.5,209 L1357.5,210 Z" fill="#0f1f2b"/>
<path d="M1188.5,213.5 L1194.7,204.5 L1197.8,209.5 L1203.3,206 L1203.3,213.5 Z" fill="#0f1f2b"/><circle cx="1200.4" cy="203.8" r="1.7" fill="#0f1f2b"/>
<!-- gray up arrows -->
<g fill="none" stroke="#9a9a9a" stroke-width="2.2">
<path d="M869,197 L885,197"/><path d="M877,219 L877,201 M870.5,207.5 L877,201 L883.5,207.5"/>
<path d="M913.5,220 L913.5,200 M906,207.5 L913.5,200 L921,207.5"/>
</g>
<g fill="none" stroke="#1a1a1a" stroke-width="2.4">
<path d="M950.5,198 L950.5,218 M943,210.5 L950.5,218 L958,210.5"/>
<path d="M988,197 L988,214 M981.5,207.5 L988,214 L994.5,207.5"/><path d="M980,219 L996,219"/>
</g>
<!-- $ -->
<path d="M1518.3,202.8 C1517.6,199.8 1515.5,198.6 1512.8,198.6 C1509.5,198.6 1507.6,200.6 1507.6,203.1 C1507.6,206 1510.2,207.2 1513.2,208.2 C1516.6,209.4 1518.8,211 1518.8,214.3 C1518.8,217.3 1516.6,219 1513.2,219 C1510.2,219 1507.9,217.6 1507.2,214.8 M1513.1,195.6 L1513.1,198.6 M1513.1,219 L1513.1,222" fill="none" stroke="#0f1f2b" stroke-width="2.3"/>
<!-- green dot -->
<radialGradient id="gd" cx="0.4" cy="0.35" r="0.7"><stop offset="0" stop-color="#9ef0a8"/><stop offset="0.6" stop-color="#3cc05a"/><stop offset="1" stop-color="#2a9a45"/></radialGradient>
<circle cx="1429.7" cy="207" r="6" fill="url(#gd)"/>
<!-- takeoff logo -->
<path d="M1914,213 L1921,204 L1929,204 L1922,213 Z" fill="#8c8c8c"/><path d="M1925,209 L1929,204 L1933,204 L1936.5,208.5 L1932,213 L1927,213 Z" fill="#1e74d0"/>
<path d="M1923,208.5 L1929,208.5" stroke="#fff" stroke-width="1"/>
<!-- gear -->
<g transform="translate(1005,262)"><circle r="5.2" fill="#1a1a1a"/><g fill="#1a1a1a"><rect x="-1.8" y="-8" width="3.6" height="16"/><rect x="-1.8" y="-8" width="3.6" height="16" transform="rotate(45)"/><rect x="-1.8" y="-8" width="3.6" height="16" transform="rotate(90)"/><rect x="-1.8" y="-8" width="3.6" height="16" transform="rotate(135)"/></g><circle r="2.3" fill="#fff"/></g>
</svg>
<!-- row 2 -->
<div class="a" style="left:526px;top:255px;width:13px;height:13px;border:1px solid #8a8a8a;background:#fff"></div>
<div class="t" style="left:542px;top:257px;font-size:10.6px;color:#333">Option special</div>
<div class="a" style="left:638px;top:251px;width:63px;height:22px;background:#dcdcdc"></div>
<div class="t" style="left:644px;top:256px;font-size:13px;font-weight:bold;color:#3a3a3a">Coûtant</div>
<div class="t" style="left:714px;top:256px;font-size:13px;font-weight:bold;color:#3a3a3a">Admin.</div>
<div class="t" style="left:776px;top:256px;font-size:13px;font-weight:bold;color:#3a3a3a">Profits</div>
<div class="t" style="left:836px;top:256px;font-size:13px;font-weight:bold;color:#3a3a3a">Vendant</div>
<div class="t" style="left:907px;top:256px;font-size:13px;font-weight:bold;color:#3a3a3a">Config.Opt.</div>
<!-- edit row -->
<div class="a" style="left:611px;top:286px;width:498px;height:19px;border:1px solid #c8c8c8;border-top:2px solid #6a6a6a;border-left:1px solid #8a8a8a;background:#fff"></div>
<div class="a" style="left:1197px;top:285px;width:903px;height:21px;border:1px solid #9a9a9a;border-right:none;background:#fff"></div>
<div class="t" style="left:1200px;top:290px;font-size:10.8px;color:#222">Rechercher un item</div>
<svg style="left:0;top:0" width="1300" height="320">
<path d="M525.9,305.4 L528.2,298.5 L544.7,282 A3.25,3.25 0 0 1 549.3,286.6 L532.8,303.1 Z" fill="#13222d"/>
<path d="M531.3,299.7 L544.2,286.8" stroke="#fff" stroke-width="1.1"/>
<path d="M558.5,285.5 L573,285.5 L576,288.5 L576,302.4 L558.5,302.4 Z" fill="none" stroke="#6a6a6a" stroke-width="2.2"/>
<rect x="562" y="285.5" width="10" height="6" fill="#6a6a6a"/><rect x="568" y="286.8" width="1.8" height="3.2" fill="#fff"/>
<path d="M600.5,302.5 Q603,291 592,290.5" fill="none" stroke="#666" stroke-width="3"/>
<path d="M585.7,290.5 L593,284.8 L593,296.2 Z" fill="#666"/>
<path d="M1138,288 Q1147.5,284 1157,288 L1150,296 L1150,305 L1145,305 L1145,296 Z" fill="#1a1a1a"/>
<path d="M1139.5,289 Q1147.5,286 1155.5,289" stroke="#fff" stroke-width="1" fill="none"/>
<path d="M1145.5,290.5 L1149.5,294 M1149.5,290.5 L1145.5,294" stroke="#fff" stroke-width="1"/>
<g fill="none" stroke="#2a2f33" stroke-width="1.8">
<path d="M1185.5,292.5 A7,7 0 0 0 1173,292"/><path d="M1172.5,299 A7,7 0 0 0 1185,300"/>
</g>
<path d="M1187,288 L1187,294.5 L1181,293.5 Z M1171,304 L1171,297.5 L1177,298.5 Z" fill="#2a2f33"/>
</svg>

<div class="a" style="left:0;top:0;width:2100px;height:720px;overflow:hidden"><div class="a" style="left:504px;top:313px;width:1596px;height:394px;background:#356b92;border-left:1px solid #8a8a8a"></div>
<div class="a" style="left:505px;top:313px;width:1595px;height:20px;background:#212b36"></div>
<div class="t" style="left:504px;top:317px;width:13px;text-align:center;font-size:11.6px;font-weight:bold;color:#fff">1</div>
<div class="a" style="left:516.5px;top:313px;width:1.2px;height:20px;background:#6e7680"></div>
<div class="t" style="left:517px;top:317px;width:13px;text-align:center;font-size:11.6px;font-weight:bold;color:#fff">2</div>
<div class="a" style="left:529.5px;top:313px;width:1.2px;height:20px;background:#6e7680"></div>
<div class="t" style="left:530px;top:317px;width:13.5px;text-align:center;font-size:11.6px;font-weight:bold;color:#fff">3</div>
<div class="a" style="left:543.0px;top:313px;width:1.2px;height:20px;background:#6e7680"></div>
<div class="t" style="left:543.5px;top:317px;width:13.0px;text-align:center;font-size:11.6px;font-weight:bold;color:#fff">4</div>
<div class="a" style="left:556.0px;top:313px;width:1.2px;height:20px;background:#6e7680"></div>
<div class="t" style="left:556.5px;top:317px;width:13.0px;text-align:center;font-size:11.6px;font-weight:bold;color:#fff">5</div>
<div class="a" style="left:569.0px;top:313px;width:1.2px;height:20px;background:#6e7680"></div>
<div class="t" style="left:569.5px;top:317px;width:13.0px;text-align:center;font-size:11.6px;font-weight:bold;color:#fff">6</div>
<div class="a" style="left:582.0px;top:313px;width:1.2px;height:20px;background:#6e7680"></div>
<div class="t" style="left:582.5px;top:315px;width:13.0px;text-align:center;font-size:10px;font-weight:bold;color:#fff">*</div>
<div class="a" style="left:595.0px;top:313px;width:1.2px;height:20px;background:#6e7680"></div>
<div class="t" style="left:595.5px;top:317px;width:22.0px;text-align:center;font-size:11.6px;font-weight:bold;color:#fff">F</div>
<div class="a" style="left:617.0px;top:313px;width:1.2px;height:20px;background:#6e7680"></div>
<div class="t" style="left:617.5px;top:317px;width:50.0px;text-align:center;font-size:11.6px;font-weight:bold;color:#fff">Modif.</div>
<div class="a" style="left:667.0px;top:313px;width:1.2px;height:20px;background:#6e7680"></div>
<div class="t" style="left:667.5px;top:317px;width:25.0px;text-align:center;font-size:11.6px;font-weight:bold;color:#fff">O</div>
<div class="a" style="left:692.0px;top:313px;width:1.2px;height:20px;background:#6e7680"></div>
<div class="t" style="left:692.5px;top:317px;width:32.0px;text-align:center;font-size:11.6px;font-weight:bold;color:#fff">Incl.</div>
<div class="a" style="left:724.0px;top:313px;width:1.2px;height:20px;background:#6e7680"></div>
<div class="t" style="left:724.5px;top:317px;width:35.0px;text-align:center;font-size:11.6px;font-weight:bold;color:#fff">Type</div>
<div class="a" style="left:759.0px;top:313px;width:1.2px;height:20px;background:#6e7680"></div>
<div class="t" style="left:759.5px;top:317px;width:302.5px;text-align:center;font-size:11.6px;font-weight:bold;color:#fff">Nom</div>
<div class="a" style="left:1061.5px;top:313px;width:1.2px;height:20px;background:#6e7680"></div>
<div class="t" style="left:1062px;top:317px;width:300.5px;text-align:center;font-size:11.6px;font-weight:bold;color:#fff">Identification</div>
<div class="a" style="left:1362.0px;top:313px;width:1.2px;height:20px;background:#6e7680"></div>
<div class="t" style="left:1362.5px;top:317px;width:51.5px;text-align:center;font-size:11.6px;font-weight:bold;color:#fff">Alt.</div>
<div class="a" style="left:1413.5px;top:313px;width:1.2px;height:20px;background:#6e7680"></div>
<div class="t" style="left:1414px;top:317px;width:15px;text-align:center;font-size:11.6px;font-weight:bold;color:#fff">+</div>
<div class="a" style="left:1428.5px;top:313px;width:1.2px;height:20px;background:#6e7680"></div>
<div class="t" style="left:1429px;top:317px;width:30.5px;text-align:center;font-size:11.6px;font-weight:bold;color:#fff">C/C</div>
<div class="a" style="left:1459.0px;top:313px;width:1.2px;height:20px;background:#6e7680"></div>
<div class="t" style="left:1459.5px;top:317px;width:696.5px;text-align:center;font-size:11.6px;font-weight:bold;color:#fff">Paramètres Optionnels</div>
<div class="a" style="left:505px;top:333px;width:1595px;height:20px;background:#fff"></div>
<div class="t" style="left:763px;top:336px;font-size:11.8px;font-weight:bold;color:#111">Test Gabarit NP</div>
<div class="a" style="left:505px;top:353px;width:1595px;height:35px;background:#2a5576"></div>
<div class="a" style="left:505px;top:388px;width:1595px;height:1px;background:#e8eef3"></div>
<div class="t" style="left:763px;top:372.0px;font-size:11.8px;color:#fff;">Total du projet</div>
<div class="t" style="left:1066px;top:372.5px;font-size:11.5px;color:#fff">Montant Forfaitaire</div>
<div class="a" style="left:668px;top:369px;width:25px;height:19px;background:#f0c400"></div>
<div class="t" style="left:668px;top:372.5px;width:25px;text-align:center;font-size:11px;color:#111">-</div>
<div class="a" style="left:600px;top:372.5px;width:12px;height:12px;border:1px solid #9aa0a4;background:linear-gradient(#f4f4f4,#dcdcdc);box-shadow:inset 0 0 0 1px #fff"></div>
<div class="t" style="left:1464px;top:357.6px;width:120px;text-align:center;font-size:9.3px;color:#fff">TotalProjet</div>
<div class="t" style="left:1450px;top:373.0px;width:80px;text-align:right;font-size:10.8px;color:#fff;text-decoration:underline">542 487,07</div>
<div class="t" style="left:1536px;top:373.0px;font-size:10.8px;color:#fff;text-decoration:underline">$</div>
<div class="a" style="left:505px;top:389px;width:1595px;height:35px;background:#356b92"></div>
<div class="a" style="left:505px;top:424px;width:1595px;height:1px;background:#e8eef3"></div>
<div class="t" style="left:763px;top:408.0px;font-size:11.8px;color:#fff;">01 - Frais Généraux</div>
<div class="a" style="left:668px;top:405px;width:25px;height:19px;background:#f0c400"></div>
<div class="t" style="left:668px;top:408.5px;width:25px;text-align:center;font-size:11px;color:#111">-</div>
<div class="a" style="left:600px;top:408.5px;width:12px;height:12px;border:1px solid #9aa0a4;background:linear-gradient(#f4f4f4,#dcdcdc);box-shadow:inset 0 0 0 1px #fff"></div>
<div class="t" style="left:1464px;top:393.6px;width:120px;text-align:center;font-size:9.3px;color:#fff">TotalProjet</div>
<div class="t" style="left:1450px;top:409.0px;width:80px;text-align:right;font-size:10.8px;color:#fff;text-decoration:underline">542 487,07</div>
<div class="t" style="left:1536px;top:409.0px;font-size:10.8px;color:#fff;text-decoration:underline">$</div>
<div class="a" style="left:505px;top:425px;width:1595px;height:19px;background:#356b92"></div>
<div class="a" style="left:505px;top:444px;width:1595px;height:1px;background:#e8eef3"></div>
<div class="t" style="left:763px;top:428.0px;font-size:11.8px;color:#fff;">02 - Conditions existantes/ aménagement du site</div>
<div class="a" style="left:600px;top:428.5px;width:12px;height:12px;border:1px solid #9aa0a4;background:linear-gradient(#f4f4f4,#dcdcdc);box-shadow:inset 0 0 0 1px #fff"></div>
<div class="a" style="left:505px;top:445px;width:1595px;height:19px;background:#356b92"></div>
<div class="a" style="left:505px;top:464px;width:1595px;height:1px;background:#e8eef3"></div>
<div class="t" style="left:763px;top:448.0px;font-size:11.8px;color:#fff;">03 - &nbsp;Béton et Coffrages</div>
<div class="a" style="left:600px;top:448.5px;width:12px;height:12px;border:1px solid #9aa0a4;background:linear-gradient(#f4f4f4,#dcdcdc);box-shadow:inset 0 0 0 1px #fff"></div>
<div class="a" style="left:505px;top:465px;width:1595px;height:19px;background:#356b92"></div>
<div class="a" style="left:505px;top:484px;width:1595px;height:1px;background:#e8eef3"></div>
<div class="t" style="left:763px;top:468.0px;font-size:11.8px;color:#fff;">04 - Maçonnerie</div>
<div class="a" style="left:600px;top:468.5px;width:12px;height:12px;border:1px solid #9aa0a4;background:linear-gradient(#f4f4f4,#dcdcdc);box-shadow:inset 0 0 0 1px #fff"></div>
<div class="a" style="left:505px;top:485px;width:1595px;height:19px;background:#356b92"></div>
<div class="a" style="left:505px;top:504px;width:1595px;height:1px;background:#e8eef3"></div>
<div class="t" style="left:763px;top:488.0px;font-size:11.8px;color:#fff;">05 - Métaux</div>
<div class="a" style="left:600px;top:488.5px;width:12px;height:12px;border:1px solid #9aa0a4;background:linear-gradient(#f4f4f4,#dcdcdc);box-shadow:inset 0 0 0 1px #fff"></div>
<div class="a" style="left:505px;top:505px;width:1595px;height:19px;background:#356b92"></div>
<div class="a" style="left:505px;top:524px;width:1595px;height:1px;background:#e8eef3"></div>
<div class="t" style="left:763px;top:508.0px;font-size:11.8px;color:#fff;">06 - Installations temporaires</div>
<div class="a" style="left:600px;top:508.5px;width:12px;height:12px;border:1px solid #9aa0a4;background:linear-gradient(#f4f4f4,#dcdcdc);box-shadow:inset 0 0 0 1px #fff"></div>
<div class="a" style="left:505px;top:525px;width:1595px;height:19px;background:#356b92"></div>
<div class="a" style="left:505px;top:544px;width:1595px;height:1px;background:#e8eef3"></div>
<div class="t" style="left:763px;top:528.0px;font-size:11.8px;color:#fff;">06 - Menuiserie divers: Podiums</div>
<div class="a" style="left:600px;top:528.5px;width:12px;height:12px;border:1px solid #9aa0a4;background:linear-gradient(#f4f4f4,#dcdcdc);box-shadow:inset 0 0 0 1px #fff"></div>
<div class="a" style="left:505px;top:545px;width:1595px;height:35px;background:#356b92"></div>
<div class="a" style="left:505px;top:580px;width:1595px;height:1px;background:#e8eef3"></div>
<div class="t" style="left:763px;top:564.0px;font-size:11.8px;color:#fff;">06 &nbsp;-Ébénisterie &amp; Cadrages</div>
<div class="a" style="left:668px;top:561px;width:25px;height:19px;background:#f0c400"></div>
<div class="t" style="left:668px;top:564.5px;width:25px;text-align:center;font-size:11px;color:#111">-</div>
<div class="a" style="left:600px;top:564.5px;width:12px;height:12px;border:1px solid #9aa0a4;background:linear-gradient(#f4f4f4,#dcdcdc);box-shadow:inset 0 0 0 1px #fff"></div>
<div class="a" style="left:636px;top:564.5px;width:12px;height:12px;border:1px solid #9aa0a4;background:linear-gradient(#f4f4f4,#dcdcdc)"></div>
<div class="t" style="left:1464px;top:549.6px;width:120px;text-align:center;font-size:9.3px;color:#fff">LongMoulurePortExt</div>
<div class="t" style="left:1450px;top:565.0px;width:80px;text-align:right;font-size:10.8px;color:#fff;text-decoration:underline">272,00</div>
<div class="t" style="left:1536px;top:565.0px;font-size:10.8px;color:#fff;text-decoration:underline">pi</div>
<div class="t" style="left:1586px;top:549.6px;width:120px;text-align:center;font-size:9.3px;color:#fff">LongMoulurePortInt</div>
<div class="t" style="left:1566px;top:565.0px;width:80px;text-align:right;font-size:10.8px;color:#fff;text-decoration:underline">34,00</div>
<div class="t" style="left:1652px;top:565.0px;font-size:10.8px;color:#fff;text-decoration:underline">pi</div>
<div class="t" style="left:1696px;top:549.6px;width:120px;text-align:center;font-size:9.3px;color:#fff">PerimFen</div>
<div class="t" style="left:1681px;top:565.0px;width:80px;text-align:right;font-size:10.8px;color:#fff;text-decoration:underline">16,00</div>
<div class="t" style="left:1767px;top:565.0px;font-size:10.8px;color:#fff;text-decoration:underline">pi</div>
<div class="t" style="left:1804px;top:549.6px;width:120px;text-align:center;font-size:9.3px;color:#fff">PerimPlancher</div>
<div class="t" style="left:1786px;top:565.0px;width:80px;text-align:right;font-size:10.8px;color:#fff;text-decoration:underline">140,00</div>
<div class="t" style="left:1872px;top:565.0px;font-size:10.8px;color:#fff;text-decoration:underline">pi</div>
<div class="a" style="left:505px;top:581px;width:1595px;height:19px;background:#356b92"></div>
<div class="a" style="left:505px;top:600px;width:1595px;height:1px;background:#e8eef3"></div>
<div class="t" style="left:763px;top:584.0px;font-size:11.8px;color:#fff;text-decoration:line-through;">06 &nbsp;Galerie et rampes</div>
<div class="a" style="left:600px;top:584.5px;width:12px;height:12px;border:1px solid #9aa0a4;background:linear-gradient(#f4f4f4,#dcdcdc);box-shadow:inset 0 0 0 1px #fff"></div>
<div class="a" style="left:505px;top:601px;width:1595px;height:35px;background:#356b92"></div>
<div class="a" style="left:505px;top:636px;width:1595px;height:1px;background:#e8eef3"></div>
<div class="t" style="left:763px;top:620.0px;font-size:11.8px;color:#fff;">06 - Cloison &amp;plafonds</div>
<div class="a" style="left:668px;top:617px;width:25px;height:19px;background:#f0c400"></div>
<div class="t" style="left:668px;top:620.5px;width:25px;text-align:center;font-size:11px;color:#111">-</div>
<div class="a" style="left:600px;top:620.5px;width:12px;height:12px;border:1px solid #9aa0a4;background:linear-gradient(#f4f4f4,#dcdcdc);box-shadow:inset 0 0 0 1px #fff"></div>
<div class="t" style="left:1464px;top:605.6px;width:120px;text-align:center;font-size:9.3px;color:#fff">MurSurfJoint-s</div>
<div class="t" style="left:1450px;top:621.0px;width:80px;text-align:right;font-size:10.8px;color:#fff;text-decoration:underline">1 000,00</div>
<div class="t" style="left:1536px;top:621.0px;font-size:10.8px;color:#fff;text-decoration:underline">pi2</div>
<div class="t" style="left:1586px;top:605.6px;width:120px;text-align:center;font-size:9.3px;color:#fff">MurSurfPrim-s</div>
<div class="t" style="left:1566px;top:621.0px;width:80px;text-align:right;font-size:10.8px;color:#fff;text-decoration:underline">1 000,00</div>
<div class="t" style="left:1652px;top:621.0px;font-size:10.8px;color:#fff;text-decoration:underline">pi2</div>
<div class="t" style="left:1696px;top:605.6px;width:120px;text-align:center;font-size:9.3px;color:#fff">MurSurfPeint-s</div>
<div class="t" style="left:1681px;top:621.0px;width:80px;text-align:right;font-size:10.8px;color:#fff;text-decoration:underline">1 000,00</div>
<div class="t" style="left:1767px;top:621.0px;font-size:10.8px;color:#fff;text-decoration:underline">pi2</div>
<div class="t" style="left:1804px;top:605.6px;width:120px;text-align:center;font-size:9.3px;color:#fff">PlafSurfJoints-s</div>
<div class="t" style="left:1786px;top:621.0px;width:80px;text-align:right;font-size:10.8px;color:#fff;text-decoration:underline">1 000,00</div>
<div class="t" style="left:1872px;top:621.0px;font-size:10.8px;color:#fff;text-decoration:underline">pi2</div>
<div class="t" style="left:1910px;top:605.6px;width:120px;text-align:center;font-size:9.3px;color:#fff">PlafSurfPrim-s</div>
<div class="t" style="left:1895px;top:621.0px;width:80px;text-align:right;font-size:10.8px;color:#fff;text-decoration:underline">1 000,00</div>
<div class="t" style="left:1981px;top:621.0px;font-size:10.8px;color:#fff;text-decoration:underline">pi2</div>
<div class="t" style="left:2015px;top:605.6px;width:120px;text-align:center;font-size:9.3px;color:#fff">PlafSurfPeint-s</div>
<div class="t" style="left:1999px;top:621.0px;width:80px;text-align:right;font-size:10.8px;color:#fff;text-decoration:underline">1 000,00</div>
<div class="t" style="left:2085px;top:621.0px;font-size:10.8px;color:#fff;text-decoration:underline">pi2</div>
<div class="a" style="left:505px;top:637px;width:1595px;height:19px;background:#356b92"></div>
<div class="a" style="left:505px;top:656px;width:1595px;height:1px;background:#e8eef3"></div>
<div class="t" style="left:763px;top:640.0px;font-size:11.8px;color:#fff;">06 - Structure planchers</div>
<div class="a" style="left:600px;top:640.5px;width:12px;height:12px;border:1px solid #9aa0a4;background:linear-gradient(#f4f4f4,#dcdcdc);box-shadow:inset 0 0 0 1px #fff"></div>
<div class="a" style="left:505px;top:657px;width:1595px;height:35px;background:#356b92"></div>
<div class="a" style="left:505px;top:692px;width:1595px;height:1px;background:#e8eef3"></div>
<div class="t" style="left:763px;top:676.0px;font-size:11.8px;color:#fff;">06 - Mur Extérieur</div>
<div class="a" style="left:668px;top:673px;width:25px;height:19px;background:#f0c400"></div>
<div class="t" style="left:668px;top:676.5px;width:25px;text-align:center;font-size:11px;color:#111">-</div>
<div class="a" style="left:600px;top:676.5px;width:12px;height:12px;border:1px solid #9aa0a4;background:linear-gradient(#f4f4f4,#dcdcdc);box-shadow:inset 0 0 0 1px #fff"></div>
<div class="t" style="left:1464px;top:661.6px;width:120px;text-align:center;font-size:9.3px;color:#fff">MurSurfJoint-s</div>
<div class="t" style="left:1450px;top:677.0px;width:80px;text-align:right;font-size:10.8px;color:#fff;text-decoration:underline">3 600,00</div>
<div class="t" style="left:1536px;top:677.0px;font-size:10.8px;color:#fff;text-decoration:underline">pi2</div>
<div class="t" style="left:1586px;top:661.6px;width:120px;text-align:center;font-size:9.3px;color:#fff">MurSurfPrim-s</div>
<div class="t" style="left:1566px;top:677.0px;width:80px;text-align:right;font-size:10.8px;color:#fff;text-decoration:underline">3 600,00</div>
<div class="t" style="left:1652px;top:677.0px;font-size:10.8px;color:#fff;text-decoration:underline">pi2</div>
<div class="t" style="left:1696px;top:661.6px;width:120px;text-align:center;font-size:9.3px;color:#fff">MurSurfPeint-s</div>
<div class="t" style="left:1681px;top:677.0px;width:80px;text-align:right;font-size:10.8px;color:#fff;text-decoration:underline">3 600,00</div>
<div class="t" style="left:1767px;top:677.0px;font-size:10.8px;color:#fff;text-decoration:underline">pi2</div>
<div class="t" style="left:1804px;top:661.6px;width:120px;text-align:center;font-size:9.3px;color:#fff">NbLint</div>
<div class="t" style="left:1786px;top:677.0px;width:80px;text-align:right;font-size:10.8px;color:#fff;text-decoration:underline">5,00</div>
<div class="t" style="left:1872px;top:677.0px;font-size:10.8px;color:#fff;text-decoration:underline">unit</div>
<div class="t" style="left:1910px;top:661.6px;width:120px;text-align:center;font-size:9.3px;color:#fff">LongLint</div>
<div class="t" style="left:1895px;top:677.0px;width:80px;text-align:right;font-size:10.8px;color:#fff;text-decoration:underline">15,00</div>
<div class="t" style="left:1981px;top:677.0px;font-size:10.8px;color:#fff;text-decoration:underline">pi</div>
<div class="a" style="left:505px;top:693px;width:1595px;height:14px;background:#356b92"></div>
<div class="t" style="left:1464px;top:697px;width:120px;text-align:center;font-size:9.3px;color:#fff">LongJambage</div>
<div class="t" style="left:1586px;top:697px;width:120px;text-align:center;font-size:9.3px;color:#fff">LongLint</div>
<div class="t" style="left:1696px;top:697px;width:120px;text-align:center;font-size:9.3px;color:#fff">LongSeuil</div>
<div class="t" style="left:1804px;top:697px;width:120px;text-align:center;font-size:9.3px;color:#fff">SurfOuvMurExt</div>
<div class="t" style="left:1910px;top:697px;width:120px;text-align:center;font-size:9.3px;color:#fff">PerimFen</div>
<div class="t" style="left:2015px;top:697px;width:120px;text-align:center;font-size:9.3px;color:#fff">LongMoulurePortExt</div>
<div class="a" style="left:600px;top:336px;width:12px;height:12px;border:1px solid #9aa0a4;background:linear-gradient(#f4f4f4,#dcdcdc)"></div>
<svg style="left:0;top:0" width="2109" height="720"><path d="M1441.5,371.5 L1447.5,371.5 L1447.5,378.5 L1450,378.5 L1444.5,385.0 L1439,378.5 L1441.5,378.5 Z" fill="#0d1a24"/><path d="M1442.5,374.5 L1446.5,374.5 M1444.5,372.5 L1444.5,376.5" stroke="#fff" stroke-width="1.2"/><line x1="511.5" y1="378.5" x2="520" y2="378.5" stroke="#000" stroke-width="1.3"/><line x1="511.5" y1="361" x2="524.0" y2="361" stroke="#000" stroke-width="1.3"/><rect x="520.5" y="374.0" width="8.5" height="8.5" fill="#e8e8e8" stroke="#a0a0a0" stroke-width="1"/><path d="M522.5,378.2 L527,378.2" stroke="#2b3f9a" stroke-width="1.3"/><path d="M1441.5,407.5 L1447.5,407.5 L1447.5,414.5 L1450,414.5 L1444.5,421.0 L1439,414.5 L1441.5,414.5 Z" fill="#0d1a24"/><path d="M1442.5,410.5 L1446.5,410.5 M1444.5,408.5 L1444.5,412.5" stroke="#fff" stroke-width="1.2"/><line x1="524.5" y1="414.5" x2="533" y2="414.5" stroke="#000" stroke-width="1.3"/><line x1="524.5" y1="397" x2="537.0" y2="397" stroke="#000" stroke-width="1.3"/><rect x="533.5" y="410.0" width="8.5" height="8.5" fill="#e8e8e8" stroke="#a0a0a0" stroke-width="1"/><path d="M535.5,414.2 L540,414.2" stroke="#2b3f9a" stroke-width="1.3"/><path d="M537.75,412.0 L537.75,416.5" stroke="#2b3f9a" stroke-width="1.3"/><path d="M1441.5,427.5 L1447.5,427.5 L1447.5,434.5 L1450,434.5 L1444.5,441.0 L1439,434.5 L1441.5,434.5 Z" fill="#0d1a24"/><path d="M1442.5,430.5 L1446.5,430.5 M1444.5,428.5 L1444.5,432.5" stroke="#fff" stroke-width="1.2"/><line x1="524.5" y1="434.5" x2="533" y2="434.5" stroke="#000" stroke-width="1.3"/><rect x="533.5" y="430.0" width="8.5" height="8.5" fill="#e8e8e8" stroke="#a0a0a0" stroke-width="1"/><path d="M535.5,434.2 L540,434.2" stroke="#2b3f9a" stroke-width="1.3"/><path d="M537.75,432.0 L537.75,436.5" stroke="#2b3f9a" stroke-width="1.3"/><path d="M1441.5,447.5 L1447.5,447.5 L1447.5,454.5 L1450,454.5 L1444.5,461.0 L1439,454.5 L1441.5,454.5 Z" fill="#0d1a24"/><path d="M1442.5,450.5 L1446.5,450.5 M1444.5,448.5 L1444.5,452.5" stroke="#fff" stroke-width="1.2"/><line x1="524.5" y1="454.5" x2="533" y2="454.5" stroke="#000" stroke-width="1.3"/><rect x="533.5" y="450.0" width="8.5" height="8.5" fill="#e8e8e8" stroke="#a0a0a0" stroke-width="1"/><path d="M535.5,454.2 L540,454.2" stroke="#2b3f9a" stroke-width="1.3"/><path d="M537.75,452.0 L537.75,456.5" stroke="#2b3f9a" stroke-width="1.3"/><path d="M1441.5,467.5 L1447.5,467.5 L1447.5,474.5 L1450,474.5 L1444.5,481.0 L1439,474.5 L1441.5,474.5 Z" fill="#0d1a24"/><path d="M1442.5,470.5 L1446.5,470.5 M1444.5,468.5 L1444.5,472.5" stroke="#fff" stroke-width="1.2"/><line x1="524.5" y1="474.5" x2="533" y2="474.5" stroke="#000" stroke-width="1.3"/><rect x="533.5" y="470.0" width="8.5" height="8.5" fill="#e8e8e8" stroke="#a0a0a0" stroke-width="1"/><path d="M535.5,474.2 L540,474.2" stroke="#2b3f9a" stroke-width="1.3"/><path d="M537.75,472.0 L537.75,476.5" stroke="#2b3f9a" stroke-width="1.3"/><path d="M1441.5,487.5 L1447.5,487.5 L1447.5,494.5 L1450,494.5 L1444.5,501.0 L1439,494.5 L1441.5,494.5 Z" fill="#0d1a24"/><path d="M1442.5,490.5 L1446.5,490.5 M1444.5,488.5 L1444.5,492.5" stroke="#fff" stroke-width="1.2"/><line x1="524.5" y1="494.5" x2="533" y2="494.5" stroke="#000" stroke-width="1.3"/><rect x="533.5" y="490.0" width="8.5" height="8.5" fill="#e8e8e8" stroke="#a0a0a0" stroke-width="1"/><path d="M535.5,494.2 L540,494.2" stroke="#2b3f9a" stroke-width="1.3"/><path d="M537.75,492.0 L537.75,496.5" stroke="#2b3f9a" stroke-width="1.3"/><path d="M1441.5,507.5 L1447.5,507.5 L1447.5,514.5 L1450,514.5 L1444.5,521.0 L1439,514.5 L1441.5,514.5 Z" fill="#0d1a24"/><path d="M1442.5,510.5 L1446.5,510.5 M1444.5,508.5 L1444.5,512.5" stroke="#fff" stroke-width="1.2"/><line x1="524.5" y1="514.5" x2="533" y2="514.5" stroke="#000" stroke-width="1.3"/><rect x="533.5" y="510.0" width="8.5" height="8.5" fill="#e8e8e8" stroke="#a0a0a0" stroke-width="1"/><path d="M535.5,514.2 L540,514.2" stroke="#2b3f9a" stroke-width="1.3"/><path d="M537.75,512.0 L537.75,516.5" stroke="#2b3f9a" stroke-width="1.3"/><path d="M1441.5,527.5 L1447.5,527.5 L1447.5,534.5 L1450,534.5 L1444.5,541.0 L1439,534.5 L1441.5,534.5 Z" fill="#0d1a24"/><path d="M1442.5,530.5 L1446.5,530.5 M1444.5,528.5 L1444.5,532.5" stroke="#fff" stroke-width="1.2"/><line x1="524.5" y1="534.5" x2="533" y2="534.5" stroke="#000" stroke-width="1.3"/><rect x="533.5" y="530.0" width="8.5" height="8.5" fill="#e8e8e8" stroke="#a0a0a0" stroke-width="1"/><path d="M535.5,534.2 L540,534.2" stroke="#2b3f9a" stroke-width="1.3"/><path d="M537.75,532.0 L537.75,536.5" stroke="#2b3f9a" stroke-width="1.3"/><path d="M639,570.5 L641.5,573.5 L645.5,566.5" stroke="#2a3d8f" stroke-width="1.5" fill="none"/><path d="M1441.5,563.5 L1447.5,563.5 L1447.5,570.5 L1450,570.5 L1444.5,577.0 L1439,570.5 L1441.5,570.5 Z" fill="#0d1a24"/><path d="M1442.5,566.5 L1446.5,566.5 M1444.5,564.5 L1444.5,568.5" stroke="#fff" stroke-width="1.2"/><line x1="524.5" y1="570.5" x2="533" y2="570.5" stroke="#000" stroke-width="1.3"/><line x1="524.5" y1="553" x2="537.0" y2="553" stroke="#000" stroke-width="1.3"/><rect x="533.5" y="566.0" width="8.5" height="8.5" fill="#e8e8e8" stroke="#a0a0a0" stroke-width="1"/><path d="M535.5,570.2 L540,570.2" stroke="#2b3f9a" stroke-width="1.3"/><path d="M537.75,568.0 L537.75,572.5" stroke="#2b3f9a" stroke-width="1.3"/><line x1="524.5" y1="590.5" x2="533" y2="590.5" stroke="#000" stroke-width="1.3"/><rect x="533.5" y="586.0" width="8.5" height="8.5" fill="#e8e8e8" stroke="#a0a0a0" stroke-width="1"/><path d="M535.5,590.2 L540,590.2" stroke="#2b3f9a" stroke-width="1.3"/><path d="M537.75,588.0 L537.75,592.5" stroke="#2b3f9a" stroke-width="1.3"/><path d="M1441.5,619.5 L1447.5,619.5 L1447.5,626.5 L1450,626.5 L1444.5,633.0 L1439,626.5 L1441.5,626.5 Z" fill="#0d1a24"/><path d="M1442.5,622.5 L1446.5,622.5 M1444.5,620.5 L1444.5,624.5" stroke="#fff" stroke-width="1.2"/><line x1="524.5" y1="626.5" x2="533" y2="626.5" stroke="#000" stroke-width="1.3"/><line x1="524.5" y1="609" x2="537.0" y2="609" stroke="#000" stroke-width="1.3"/><rect x="533.5" y="622.0" width="8.5" height="8.5" fill="#e8e8e8" stroke="#a0a0a0" stroke-width="1"/><path d="M535.5,626.2 L540,626.2" stroke="#2b3f9a" stroke-width="1.3"/><path d="M537.75,624.0 L537.75,628.5" stroke="#2b3f9a" stroke-width="1.3"/><path d="M1441.5,639.5 L1447.5,639.5 L1447.5,646.5 L1450,646.5 L1444.5,653.0 L1439,646.5 L1441.5,646.5 Z" fill="#0d1a24"/><path d="M1442.5,642.5 L1446.5,642.5 M1444.5,640.5 L1444.5,644.5" stroke="#fff" stroke-width="1.2"/><line x1="524.5" y1="646.5" x2="533" y2="646.5" stroke="#000" stroke-width="1.3"/><rect x="533.5" y="642.0" width="8.5" height="8.5" fill="#e8e8e8" stroke="#a0a0a0" stroke-width="1"/><path d="M535.5,646.2 L540,646.2" stroke="#2b3f9a" stroke-width="1.3"/><path d="M537.75,644.0 L537.75,648.5" stroke="#2b3f9a" stroke-width="1.3"/><path d="M1441.5,675.5 L1447.5,675.5 L1447.5,682.5 L1450,682.5 L1444.5,689.0 L1439,682.5 L1441.5,682.5 Z" fill="#0d1a24"/><path d="M1442.5,678.5 L1446.5,678.5 M1444.5,676.5 L1444.5,680.5" stroke="#fff" stroke-width="1.2"/><line x1="524.5" y1="682.5" x2="533" y2="682.5" stroke="#000" stroke-width="1.3"/><line x1="524.5" y1="665" x2="537.0" y2="665" stroke="#000" stroke-width="1.3"/><rect x="533.5" y="678.0" width="8.5" height="8.5" fill="#e8e8e8" stroke="#a0a0a0" stroke-width="1"/><path d="M535.5,682.2 L540,682.2" stroke="#2b3f9a" stroke-width="1.3"/><path d="M537.75,680.0 L537.75,684.5" stroke="#2b3f9a" stroke-width="1.3"/><line x1="1459.5" y1="333" x2="1459.5" y2="707" stroke="#7a7f85" stroke-width="1"/><line x1="511.5" y1="346" x2="511.5" y2="378.5" stroke="#000" stroke-width="1.3"/><line x1="511.5" y1="360.5" x2="524" y2="360.5" stroke="#000" stroke-width="1.3"/><line x1="524.5" y1="383" x2="524.5" y2="707" stroke="#000" stroke-width="1.3"/><line x1="524.5" y1="701" x2="537" y2="701" stroke="#000" stroke-width="1.3"/><rect x="507.5" y="338" width="8.5" height="8.5" fill="#e8e8e8" stroke="#a0a0a0" stroke-width="1"/><path d="M509.5,342.2 L514,342.2" stroke="#2b3f9a" stroke-width="1.3"/></svg></div>
<div class="a" style="left:508px;top:714px;width:1592px;height:17px;background:#9db4d3"></div>
<div class="t" style="left:510px;top:717px;font-size:11.4px;color:#1a1a1a">Erreurs / Améliorations</div>
<svg style="left:0;top:0" width="2109" height="900">
<g fill="none" stroke="#12222e" stroke-width="3.2">
<path d="M540,746 A12.3,12.3 0 0 0 519.3,754"/>
<path d="M521.5,762.5 A12.3,12.3 0 0 0 542.7,754"/>
</g>
<path d="M544.5,741 L544.5,752 L533.5,751 Z" fill="#12222e"/>
<path d="M517.5,767 L517.5,756 L528.5,757 Z" fill="#12222e"/>
</svg>
<div class="a" style="left:560px;top:747px;width:12px;height:12px;border:1px solid #c8c8c8;border-top:2px solid #777;border-left:2px solid #777;background:#fff"></div>
<svg style="left:0;top:0" width="2109" height="900"><path d="M562.5,752.5 L565.5,756 L570,749" fill="none" stroke="#111" stroke-width="1.9"/></svg>
<div class="t" style="left:578px;top:748px;font-size:11.5px;color:#333">Mise à jour automatique</div>
<div class="a" style="left:506px;top:773px;width:1594px;height:3px;background:#9ab0cc"></div>
<!-- error grid -->
<div class="a" style="left:506px;top:789px;width:1594px;height:19px;background:#efefef"></div>
<div class="a" style="left:565.5px;top:789px;width:1px;height:39px;background:#a8a8a8"></div>
<div class="a" style="left:1065px;top:789px;width:1px;height:39px;background:#a8a8a8"></div>
<div class="t" style="left:558px;top:793px;font-size:10px;color:#a07040">!</div>
<div class="t" style="left:569px;top:793px;font-size:11px;color:#222">Nom</div>
<div class="t" style="left:1069px;top:793px;font-size:11px;color:#222">Emplacement</div>
<div class="a" style="left:506px;top:807.5px;width:1594px;height:1px;background:#9a9a9a"></div>
<div class="a" style="left:506px;top:808.5px;width:1594px;height:19.5px;background:#0078d7"></div>
<div class="a" style="left:565.5px;top:808.5px;width:1px;height:19.5px;background:#d8e6f2"></div>
<div class="a" style="left:1065px;top:808.5px;width:1px;height:19.5px;background:#d8e6f2"></div>
<div class="a" style="left:506px;top:828.5px;width:1594px;height:1.5px;background:#777"></div>
<div class="a" style="left:507px;top:811px;width:17px;height:14px;background:#ffff00"></div>
<svg style="left:0;top:0" width="2109" height="900"><g fill="#ff0000">
<path d="M510.5,812 L513,812 L512.5,820.5 L511,820.5 Z"/><path d="M517.5,812 L520,812 L519.5,820.5 L518,820.5 Z"/>
<path d="M511.75,821.5 L513.2,823 L511.75,824.5 L510.3,823 Z"/><path d="M518.75,821.5 L520.2,823 L518.75,824.5 L517.3,823 Z"/>
</g></svg>
<div class="t" style="left:532px;top:813px;font-size:11.5px;color:#fff">Erreur</div>
<div class="t" style="left:569px;top:813px;font-size:11.5px;color:#fff">L'item [108565] est en modification.</div>
<div class="t" style="left:1069px;top:813px;font-size:11.2px;color:#fff">Test Gabarit NP\107849\104941\108007</div>

<div class="a" style="left:506px;top:1109px;width:117px;height:22px;border:1.5px solid #555;background:#fff"></div>
<div class="a" style="left:622px;top:1109px;width:74px;height:22px;border:1.5px solid #555;background:#fff"></div>
<div class="a" style="left:695px;top:1109px;width:58px;height:22px;border:1.5px solid #555;background:#fff"></div>
<div class="a" style="left:752px;top:1109px;width:133px;height:22px;border:1.5px solid #555;background:#fff"></div>
<div class="a" style="left:884px;top:1109px;width:58px;height:22px;border:1.5px solid #555;background:#fff"></div>
<div class="a" style="left:941px;top:1109px;width:66px;height:22px;border:1.5px solid #555;background:#fff"></div>
<div class="a" style="left:1008px;top:1107px;width:1092px;height:26px;background:#efefef"></div>
<div class="t" style="left:514px;top:1114px;font-size:12px;color:#1a1a1a">Descriptions /Notes</div>
<div class="t" style="left:631px;top:1114px;font-size:11.2px;color:#1a1a1a">Paramètres</div>
<div class="t" style="left:704px;top:1114px;font-size:11.6px;color:#1a1a1a">Coûtant</div>
<div class="t" style="left:760px;top:1114px;font-size:11.4px;color:#555">Erreurs / Améliorations</div>
<div class="t" style="left:892px;top:1114px;font-size:11.6px;color:#1a1a1a">Résumé</div>
<div class="t" style="left:949px;top:1114px;font-size:12px;color:#1a1a1a">Utilisation</div>
<!-- status bar -->
<div class="a" style="left:5px;top:1132px;width:2095px;height:23px;background:#efefef"></div>
<div class="a" style="left:5px;top:1133px;width:190px;height:21px;border-top:1px solid #c4c4c4"></div>
<div class="a" style="left:197px;top:1133px;width:173px;height:21px;border-top:1px solid #c4c4c4;border-left:1px solid #a8a8a8"></div>
<div class="a" style="left:372px;top:1133px;width:1728px;height:21px;border-top:1px solid #c4c4c4;border-left:1px solid #a8a8a8"></div>
<div class="a" style="left:500px;top:1132px;width:1600px;height:1.2px;background:#8a8a8a"></div>
<div class="a" style="left:5px;top:1134px;width:300px;height:20px;overflow:hidden"><div class="t" style="left:-7px;top:5px;font-size:10.9px;color:#111">108554</div></div>
<div class="t" style="left:199px;top:1139px;font-size:10.9px;color:#111">530 Enregistrements</div>
<div class="t" style="left:374px;top:1139px;font-size:10.9px;color:#111">[Type: Assemblage], [Nom: Cadrage des portes (moulures)]</div>
<div class="a" style="left:5px;top:1157px;width:2095px;height:10px;background:#efefef"></div>
<div class="a" style="left:128px;top:1161px;width:1px;height:6px;background:#c8c8c8"></div>
<div class="a" style="left:88px;top:1164px;width:22px;height:3px;overflow:hidden"><div class="t" style="left:0;top:0;font-size:11px;color:#333">ffec</div></div>

<svg style="left:0;top:0" width="2109" height="1176">
<defs><filter id="sh" x="-10%" y="-30%" width="120%" height="160%"><feGaussianBlur stdDeviation="2.2"/></filter></defs>
<g fill="none">
<ellipse cx="742" cy="826" rx="251" ry="39" stroke="rgba(0,0,0,0.45)" stroke-width="3.5" filter="url(#sh)" transform="rotate(-1.2 742 826)"/>
<ellipse cx="740" cy="822" rx="251" ry="40" stroke="#c5121b" stroke-width="3" transform="rotate(-1.2 740 822)"/>
<ellipse cx="826" cy="1122" rx="77" ry="27" stroke="rgba(0,0,0,0.45)" stroke-width="3.5" filter="url(#sh)" transform="rotate(-4 826 1122)"/>
<ellipse cx="824" cy="1118" rx="77" ry="27" stroke="#c5121b" stroke-width="3" transform="rotate(-4 824 1118)"/>
</g>
<path d="M337.5,540.5 L337.5,556 L341.2,552.4 L343.8,558.3 L346,557.3 L343.5,551.5 L348.6,551.5 Z" fill="#fff" stroke="#000" stroke-width="1" stroke-linejoin="miter"/>
</svg>

</body></html>
